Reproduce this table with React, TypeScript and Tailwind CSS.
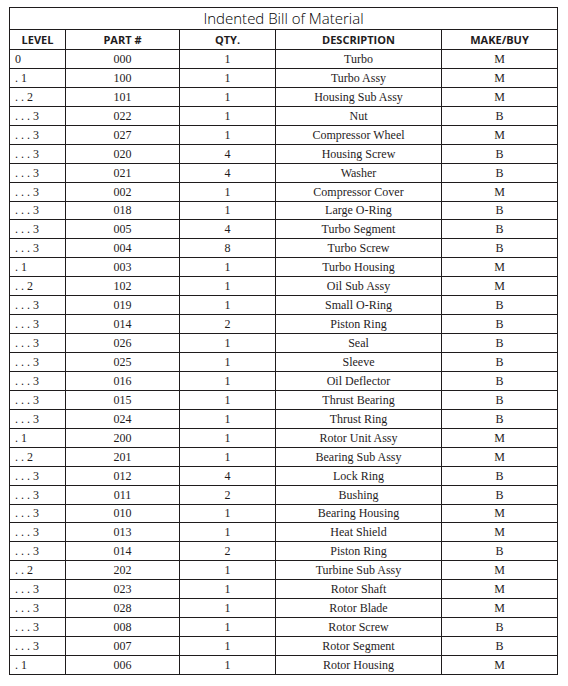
const rows: [string, string, string, string, string][] = [
  ['0', '000', '1', 'Turbo', 'M'],
  ['. 1', '100', '1', 'Turbo Assy', 'M'],
  ['. . 2', '101', '1', 'Housing Sub Assy', 'M'],
  ['. . . 3', '022', '1', 'Nut', 'B'],
  ['. . . 3', '027', '1', 'Compressor Wheel', 'M'],
  ['. . . 3', '020', '4', 'Housing Screw', 'B'],
  ['. . . 3', '021', '4', 'Washer', 'B'],
  ['. . . 3', '002', '1', 'Compressor Cover', 'M'],
  ['. . . 3', '018', '1', 'Large O-Ring', 'B'],
  ['. . . 3', '005', '4', 'Turbo Segment', 'B'],
  ['. . . 3', '004', '8', 'Turbo Screw', 'B'],
  ['. 1', '003', '1', 'Turbo Housing', 'M'],
  ['. . 2', '102', '1', 'Oil Sub Assy', 'M'],
  ['. . . 3', '019', '1', 'Small O-Ring', 'B'],
  ['. . . 3', '014', '2', 'Piston Ring', 'B'],
  ['. . . 3', '026', '1', 'Seal', 'B'],
  ['. . . 3', '025', '1', 'Sleeve', 'B'],
  ['. . . 3', '016', '1', 'Oil Deflector', 'B'],
  ['. . . 3', '015', '1', 'Thrust Bearing', 'B'],
  ['. . . 3', '024', '1', 'Thrust Ring', 'B'],
  ['. 1', '200', '1', 'Rotor Unit Assy', 'M'],
  ['. . 2', '201', '1', 'Bearing Sub Assy', 'M'],
  ['. . . 3', '012', '4', 'Lock Ring', 'B'],
  ['. . . 3', '011', '2', 'Bushing', 'B'],
  ['. . . 3', '010', '1', 'Bearing Housing', 'M'],
  ['. . . 3', '013', '1', 'Heat Shield', 'M'],
  ['. . . 3', '014', '2', 'Piston Ring', 'B'],
  ['. . 2', '202', '1', 'Turbine Sub Assy', 'M'],
  ['. . . 3', '023', '1', 'Rotor Shaft', 'M'],
  ['. . . 3', '028', '1', 'Rotor Blade', 'M'],
  ['. . . 3', '008', '1', 'Rotor Screw', 'B'],
  ['. . . 3', '007', '1', 'Rotor Segment', 'B'],
  ['. 1', '006', '1', 'Rotor Housing', 'M'],
]

const headers = ['LEVEL', 'PART #', 'QTY.', 'DESCRIPTION', 'MAKE/BUY']

export default function App() {
  return (
    <div className="min-h-[686px] w-[568px] bg-white pl-[9px] pt-[7px] text-[#1f1c1d]">
      <table className="w-[548px] table-fixed border-collapse border border-[#1f1c1d]">
        <colgroup>
          <col className="w-[56px]" />
          <col className="w-[114px]" />
          <col className="w-[96px]" />
          <col className="w-[166px]" />
          <col className="w-[116px]" />
        </colgroup>
        <thead>
          <tr className="h-[22px]">
            <th
              colSpan={5}
              className="border border-[#1f1c1d] p-0 text-center text-[15px] font-light leading-none text-black"
              style={{ fontFamily: '"Open Sans", sans-serif' }}
            >
              Indented Bill of Material
            </th>
          </tr>
          <tr className="h-[20px]">
            {headers.map((h) => (
              <th
                key={h}
                className="border border-[#1f1c1d] p-0 text-center text-[11px] font-bold leading-none"
                style={{ fontFamily: '"Open Sans", sans-serif' }}
              >
                {h}
              </th>
            ))}
          </tr>
        </thead>
        <tbody className="font-['Liberation_Serif',serif] text-[12px] leading-none">
          {rows.map((r, i) => (
            <tr key={i} className="h-[18.94px]">
              <td className="border border-[#1f1c1d] py-0 pl-[5px] text-left">{r[0]}</td>
              <td className="border border-[#1f1c1d] p-0 text-center">{r[1]}</td>
              <td className="border border-[#1f1c1d] p-0 text-center">{r[2]}</td>
              <td className="border border-[#1f1c1d] p-0 text-center">{r[3]}</td>
              <td className="border border-[#1f1c1d] p-0 text-center">{r[4]}</td>
            </tr>
          ))}
        </tbody>
      </table>
    </div>
  )
}
